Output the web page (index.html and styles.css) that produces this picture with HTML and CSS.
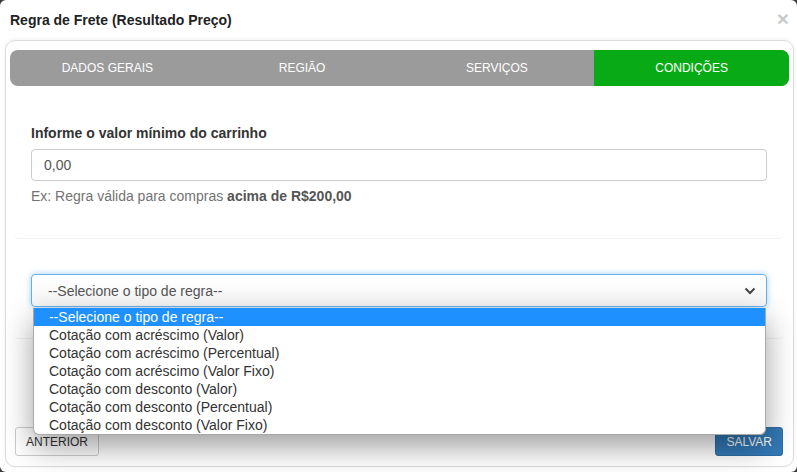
FILE: index.html
```html
<!DOCTYPE html>
<html lang="pt-BR">
<head>
  <meta charset="UTF-8">
  <meta name="viewport" content="width=device-width, initial-scale=1.0">
  <title>Regra de Frete</title>
  <link rel="stylesheet" href="styles.css">
</head>
<body>
  <div class="modal">
    <div class="modal-header">
      <h4 class="modal-title">Regra de Frete (Resultado Preço)</h4>
      <span class="close">&times;</span>
    </div>

    <div class="card">
      <div class="tabs">
        <div class="tab">Dados Gerais</div>
        <div class="tab">Região</div>
        <div class="tab">Serviços</div>
        <div class="tab active">Condições</div>
      </div>

      <div class="panel panel-valor">
        <label class="field-label">Informe o valor mínimo do carrinho</label>
        <div class="input">0,00</div>
        <p class="help">Ex: Regra válida para compras <b>acima de R$200,00</b></p>
      </div>

      <div class="panel panel-regra">
        <div class="select-wrap">
          <div class="select">
            <span>--Selecione o tipo de regra--</span>
            <svg class="chevron" width="12" height="8" viewBox="0 0 12 8">
              <path d="M1.5 1.5 L6 6 L10.5 1.5" fill="none" stroke="#444" stroke-width="2"/>
            </svg>
          </div>
          <ul class="options">
            <li class="selected">--Selecione o tipo de regra--</li>
            <li>Cotação com acréscimo (Valor)</li>
            <li>Cotação com acréscimo (Percentual)</li>
            <li>Cotação com acréscimo (Valor Fixo)</li>
            <li>Cotação com desconto (Valor)</li>
            <li>Cotação com desconto (Percentual)</li>
            <li>Cotação com desconto (Valor Fixo)</li>
          </ul>
        </div>
      </div>

      <div class="footer">
        <button class="btn">Anterior</button>
        <button class="btn btn-primary">Salvar</button>
      </div>
    </div>
  </div>
</body>
</html>
```

FILE: styles.css
```css
/* Base */
html, body {
  margin: 0;
  padding: 0;
  height: 100%;
}

body {
  background: #3a3a3a;
  font-family: "Liberation Sans", Arial, sans-serif;
  color: #333;
  overflow: hidden;
}

.modal {
  height: 472px;
  background: #fff;
  border-radius: 6px;
  display: flex;
  flex-direction: column;
}

/* Header */
.modal-header {
  height: 40px;
  padding: 0 10px;
  display: flex;
  justify-content: space-between;
  align-items: center;
}

.modal-title {
  margin: 0;
  font-size: 14px;
  font-weight: bold;
  color: #222;
}

.close {
  font-size: 21px;
  font-weight: bold;
  color: #c9c9c9;
  line-height: 1;
  margin-right: -2px;
  margin-top: -3px;
}

/* Card */
.card {
  flex: 1;
  margin: 0 3px 5px 5px;
  border: 1px solid #dcdcdc;
  border-radius: 10px;
  padding: 9px 4px 0 4px;
  box-shadow: 0 -1px 4px rgba(0, 0, 0, 0.06);
}

/* Tabs */
.tabs {
  display: grid;
  grid-template-columns: repeat(4, 1fr);
  height: 36px;
  border-radius: 8px;
  overflow: hidden;
  background: #9b9b9b;
}

.tab {
  display: flex;
  justify-content: center;
  align-items: center;
  color: #fff;
  font-size: 12px;
  text-transform: uppercase;
}

.tab.active {
  background: #08ab15;
}

/* Panels */
.panel {
  margin: 14px 6px 0 5px;
  border: 1px solid transparent;
  border-radius: 4px;
  padding: 23px 15px 31px;
  box-shadow: 0 1px 1px rgba(0, 0, 0, 0.06);
}

.panel-regra {
  margin-top: 12px;
  padding-bottom: 30px;
}

.field-label {
  display: block;
  font-size: 14px;
  font-weight: bold;
  line-height: 18px;
  margin-bottom: 7px;
  color: #333;
}

.input {
  height: 32px;
  box-sizing: border-box;
  border: 1px solid #ccc;
  border-radius: 4px;
  padding: 0 12px;
  font-size: 14px;
  line-height: 30px;
  color: #555;
}

.help {
  margin: 5px 0 0;
  font-size: 14px;
  line-height: 20px;
  color: #737373;
}

.help b {
  color: #555;
}

/* Select */
.select-wrap {
  position: relative;
}

.select {
  height: 33px;
  box-sizing: border-box;
  border: 1px solid #66afe9;
  border-radius: 4px;
  padding: 0 10px 0 16px;
  display: flex;
  align-items: center;
  justify-content: space-between;
  font-size: 14px;
  color: #555;
  background: linear-gradient(#fff, #f6f6f6);
  box-shadow: 0 0 6px rgba(102, 175, 233, 0.6);
}

.options {
  position: absolute;
  top: 34px;
  left: 2px;
  right: 1px;
  z-index: 5;
  margin: 0;
  padding: 0;
  list-style: none;
  background: #fff;
  border: 1px solid #a8a8a8;
  border-top: none;
  border-radius: 0 0 6px 6px;
  box-shadow: 0 12px 30px rgba(0, 0, 0, 0.38);
}

.options li {
  height: 18px;
  line-height: 18px;
  padding: 0 15px;
  font-size: 14px;
  color: #333;
}

.options li.selected {
  background: #1e90ff;
  color: #fff;
}

/* Footer */
.footer {
  margin: 89px 6px 0 5px;
  display: flex;
  justify-content: space-between;
}

.btn {
  height: 29px;
  padding: 0 10px;
  font-family: inherit;
  font-size: 12px;
  text-transform: uppercase;
  color: #333;
  background: #fff;
  border: 1px solid #ccc;
  border-radius: 3px;
}

.btn-primary {
  background: #337ab7;
  border-color: #2e6da4;
  color: #fff;
}
```
